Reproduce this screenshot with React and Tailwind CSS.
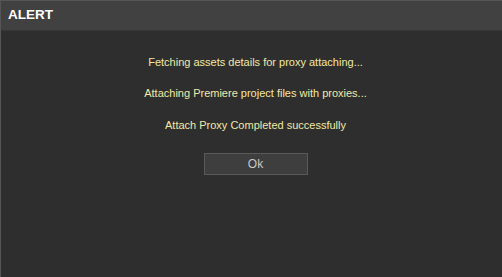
import React from "react";

const messages = [
  "Fetching assets details for proxy attaching...",
  "Attaching Premiere project files with proxies...",
  "Attach Proxy Completed successfully",
];

const App = () => {
  return (
    <div className="w-[502px] h-[277px] bg-[#2e2e2e] border-t border-l border-[#555555] flex flex-col overflow-hidden">
      {/* Header */}
      <div className="h-[30px] shrink-0 bg-[#414141] border-b border-[#353535] flex items-center pl-[7px]">
        <span className="text-white font-bold text-[13.5px] font-['Liberation_Sans',Arial,sans-serif]">
          ALERT
        </span>
      </div>

      {/* Body */}
      <div className="flex flex-col items-center pl-[8px] pt-[24px] text-[#f2e9a6] text-[11px] font-['Liberation_Sans',Arial,sans-serif]">
        <p className="leading-[14px]">{messages[0]}</p>
        <p className="leading-[14px] mt-[17px]">{messages[1]}</p>
        <p className="leading-[14px] mt-[18px]">{messages[2]}</p>
        <button className="mt-[21px] w-[104px] h-[22px] bg-[#3e3e3e] border border-[#5a5a5a] text-[#c8c8c8] text-[12px] font-['Liberation_Sans',Arial,sans-serif]">
          Ok
        </button>
      </div>
    </div>
  );
};

export default App;
